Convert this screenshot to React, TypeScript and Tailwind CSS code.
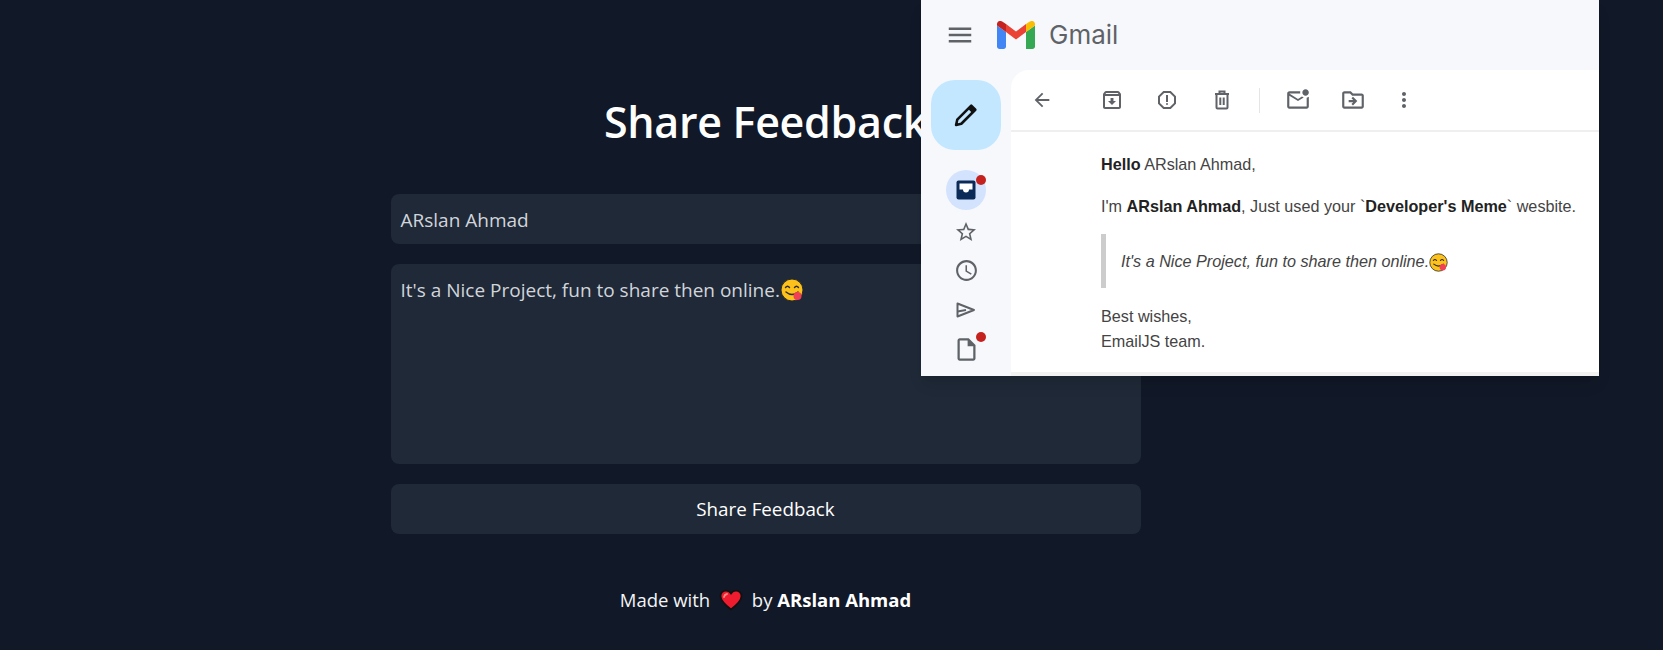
import React from "react";
import {
  MdMenu, MdArrowBack, MdOutlineArchive, MdOutlineReport, MdOutlineMarkEmailUnread,
  MdOutlineDriveFileMove, MdMoreVert, MdOutlineStarBorder, MdOutlineSchedule,
  MdOutlineInsertDriveFile,
} from "react-icons/md";

function Yum({ size }: { size: number }) {
  return (
    <svg width={size} height={size} viewBox="0 0 24 24" className="inline-block align-[-5px]">
      <circle cx="12" cy="12" r="11" fill="#fcc21b" stroke="#2b2b2b" strokeWidth="1" />
      <path d="M5.500 9.500q2-2.500 4 0M14.500 9.500q2-2.500 4 0" fill="none" stroke="#2b2b2b" strokeWidth="1.400" strokeLinecap="round" />
      <path d="M6 14q6 5 12 0" fill="none" stroke="#2b2b2b" strokeWidth="1.400" strokeLinecap="round" />
      <circle cx="17.500" cy="18" r="4" fill="#ef4056" />
    </svg>
  );
}

function Heart() {
  return (
    <svg width="24" height="22" viewBox="0 0 24 22" className="inline-block align-[-4px]">
      <path d="M12 20.500C5 15 1.500 11.500 1.500 7.200 1.500 4 4 1.600 7 1.600c2 0 3.800 1 5 2.800 1.200-1.800 3-2.800 5-2.800 3 0 5.500 2.400 5.500 5.600 0 4.300-3.500 7.800-10.500 13.300z" fill="#ee1c2e" stroke="#111" strokeWidth="1.800" />
      <path d="M5 8q.5-2.500 3-3" fill="none" stroke="#ff8a80" strokeWidth="1.800" strokeLinecap="round" />
    </svg>
  );
}

function GmailLogo() {
  return (
    <svg width="38" height="28" viewBox="0 0 38 28">
      <path d="M2.600 28H6.500c1.400 0 2.500-1.100 2.500-2.500V11L0 4.500v21C0 26.900 1.200 28 2.600 28z" fill="#4285f4" />
      <path d="M29 28h6.400c1.400 0 2.600-1.100 2.600-2.500V4.500L29 11z" fill="#34a853" />
      <path d="M29 3v8l9-6.500V3.200C38 .5 34.900-1 32.800.6z" fill="#fbbc04" />
      <path d="M9 11V3l10 7.500L29 3v8l-10 7.500z" fill="#ea4335" />
      <path d="M0 3.200v1.300L9 11V3L5.200.6C3.100-1 0 .5 0 3.200z" fill="#c5221f" />
    </svg>
  );
}

function InboxIcon() {
  return (
    <svg width="20" height="20" viewBox="0 0 20 20">
      <rect x="0.500" y="0.500" width="19" height="19" rx="2" fill="#0b2a57" />
      <path d="M3.500 3.500h13v6h-3.500a3 3 0 0 1-6 0H3.500z" fill="#fff" />
    </svg>
  );
}

function SendIcon() {
  return (
    <svg width="20" height="16" viewBox="0 0 20 16" fill="none" stroke="#5f6368" strokeWidth="2" strokeLinejoin="round">
      <path d="M1.500 1.500L18 8 1.500 14.500z" />
      <path d="M1.500 9.500L10 8" />
    </svg>
  );
}

function TrashIcon() {
  return (
    <svg width="24" height="24" viewBox="0 0 24 24" fill="none" stroke="#5f6368" strokeWidth="2">
      <path d="M5 6h14M9.500 5V3.500h5V5" />
      <path d="M6.500 6v13.500a1 1 0 0 0 1 1h9a1 1 0 0 0 1-1V6" />
      <path d="M10.300 9.500v7.500M13.700 9.500v7.500" />
    </svg>
  );
}

function GmailOverlay() {
  return (
    <div className="absolute left-[921px] top-0 w-[678px] h-[376px] bg-[#f6f8fc] overflow-hidden flex flex-col shadow-lg">
      <div className="h-[70px] flex items-center pl-[24px] shrink-0">
        <MdMenu size={30} className="text-[#5f6368]" />
        <div className="ml-[22px]"><GmailLogo /></div>
        <span className="ml-[14px] text-[26px] text-[#5f6368] font-['Inter',sans-serif] leading-none">Gmail</span>
      </div>
      <div className="flex flex-1 min-h-0">
        <div className="w-[90px] shrink-0 flex flex-col items-center">
          <div className="w-[70px] h-[70px] mt-[10px] rounded-[24px] bg-[#c2e7ff] flex items-center justify-center">
            <svg width="28" height="28" viewBox="0 0 24 24" fill="none" stroke="#111" strokeWidth="2.200">
              <path d="M3.500 20.500l1-4.500L16.500 4l3.500 3.500L8 19.500z" strokeLinejoin="round" />
              <path d="M15 5.500l3.500 3.500" strokeWidth="3.500" />
            </svg>
          </div>
          <div className="relative w-10 h-10 mt-[20px] rounded-full bg-[#d3e3fd] flex items-center justify-center">
            <InboxIcon />
            <span className="absolute right-0 top-[5px] w-[10px] h-[10px] rounded-full bg-[#c5221f]" />
          </div>
          <MdOutlineStarBorder size={24} className="text-[#5f6368] mt-[10px]" />
          <MdOutlineSchedule size={25} className="text-[#5f6368] mt-[14px]" />
          <div className="mt-[19px]"><SendIcon /></div>
          <div className="relative mt-[18px]">
            <MdOutlineInsertDriveFile size={27} className="text-[#5f6368]" />
            <span className="absolute right-[-6px] top-[-4px] w-[10px] h-[10px] rounded-full bg-[#c5221f]" />
          </div>
        </div>
        <div className="flex-1 bg-white rounded-tl-[18px] flex flex-col font-['Liberation_Sans',sans-serif] text-[16.2px] text-[#444] min-w-0">
          <div className="h-[62px] shrink-0 flex items-center border-b-2 border-[#efefef] text-[#5f6368]">
            <MdArrowBack size={22} className="ml-[20px]" />
            <MdOutlineArchive size={24} className="ml-[47px]" />
            <MdOutlineReport size={24} className="ml-[31px]" />
            <div className="ml-[31px]"><TrashIcon /></div>
            <div className="w-px h-[25px] bg-[#e5e5e5] ml-[25px]" />
            <MdOutlineMarkEmailUnread size={26} className="ml-[25px]" />
            <MdOutlineDriveFileMove size={26} className="ml-[29px]" />
            <MdMoreVert size={24} className="ml-[26px]" />
          </div>
          <div className="pl-[90px] pt-[22px] flex-1 leading-[20px]">
            <p><b className="text-[#222]">Hello</b> ARslan Ahmad,</p>
            <p className="mt-[22px]">I'm <b className="text-[#222]">ARslan Ahmad</b>, Just used your `<b className="text-[#222]">Developer's Meme</b>` wesbite.</p>
            <div className="mt-[18px] h-[54px] border-l-[5px] border-[#cccccc] pl-[15px] flex items-center italic">
              <span>It's a Nice Project, fun to share then online.<Yum size={19} /></span>
            </div>
            <p className="mt-[16px] leading-[25px]">Best wishes,<br />EmailJS team.</p>
          </div>
          <div className="h-[4px] bg-[#f2f2f2] shrink-0" />
        </div>
      </div>
    </div>
  );
}

export default function App() {
  return (
    <div className="relative w-full h-[650px] bg-[#111827] overflow-hidden font-['Open_Sans',sans-serif]">
      <div className="w-[1531px] flex flex-col items-center pt-[88px]">
        <h1 className="text-[43px] leading-[68px] font-semibold text-white tracking-[-0.3px]">Share Feedback</h1>
        <div className="w-[750px] mt-[38px] flex flex-col">
          <div className="h-[50px] rounded-lg bg-[#1f2937] px-[10px] pt-[2px] flex items-center text-[19px] text-[#d1d5db]">ARslan Ahmad</div>
          <div className="h-[200px] mt-[20px] rounded-lg bg-[#1f2937] px-[10px] pt-[12px] text-[19px] leading-[28px] text-[#d1d5db]">
            It's a Nice Project, fun to share then online.<Yum size={24} />
          </div>
          <button className="h-[50px] mt-[20px] rounded-lg bg-[#1f2937] text-[18.800px] text-white">Share Feedback</button>
        </div>
        <p className="mt-[52px] text-[18.500px] leading-[28px] text-[#f3f4f6]">
          Made with <span className="mx-[4px]"><Heart /></span> by <b className="font-bold text-white">ARslan Ahmad</b>
        </p>
      </div>
      <GmailOverlay />
    </div>
  );
}
